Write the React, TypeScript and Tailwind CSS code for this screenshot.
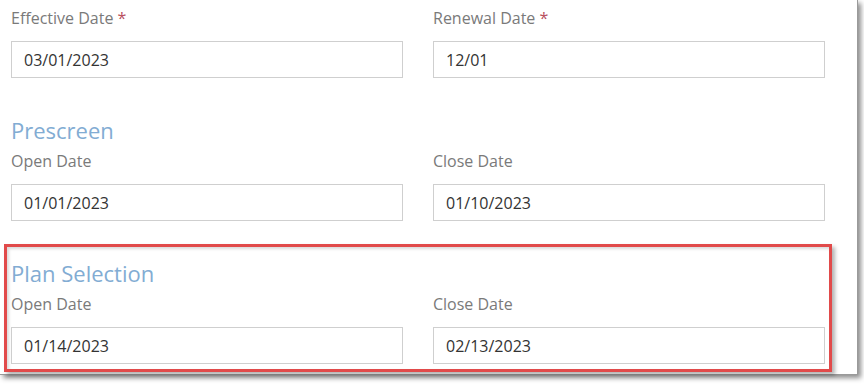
import React from 'react'

interface Field {
	label: string
	value: string
	required?: boolean
}

interface Section {
	title?: string
	fields: [Field, Field]
	highlight?: boolean
}

const SECTIONS: Section[] = [
	{
		fields: [
			{ label: 'Effective Date', value: '03/01/2023', required: true },
			{ label: 'Renewal Date', value: '12/01', required: true },
		],
	},
	{
		title: 'Prescreen',
		fields: [
			{ label: 'Open Date', value: '01/01/2023' },
			{ label: 'Close Date', value: '01/10/2023' },
		],
	},
	{
		title: 'Plan Selection',
		highlight: true,
		fields: [
			{ label: 'Open Date', value: '01/14/2023' },
			{ label: 'Close Date', value: '02/13/2023' },
		],
	},
]

function DateField({ label, value, required }: Field) {
	return (
		<div className="flex flex-col">
			<label className="h-[20px] text-[16px] leading-[20px] text-[#7a7a7a]">
				{label}
				{required && <span className="text-[#b8505e]"> *</span>}
			</label>
			<input
				readOnly
				defaultValue={value}
				className="mt-[13px] h-[37px] w-full border border-[#cfcfcf] bg-white px-3 text-[16px] text-[#333] outline-none"
			/>
		</div>
	)
}

export default function App() {
	return (
		<div className="h-[386px] w-[864px] overflow-hidden bg-white font-['Open_Sans',sans-serif]">
			<div className="h-[375px] w-[858px] border-r border-b border-[#9a9a9a] bg-white pl-[11px] pt-2 shadow-[3px_3px_5px_rgba(0,0,0,0.45)]">
				<div className="flex w-[814px] flex-col gap-[39px]">
					{SECTIONS.map((s, i) => (
						<div key={i} className="relative">
							{s.highlight && (
								<div className="pointer-events-none absolute -top-4 -right-[7px] -bottom-2 -left-[7px] border-[3px] border-[#e14a4a] shadow-[3px_3px_4px_rgba(0,0,0,0.3),inset_2px_2px_3px_rgba(0,0,0,0.15)]" />
							)}
							{s.title && (
								<h2 className="mb-[7px] h-[27px] text-[22px] leading-[27px] font-normal text-[#82acd3]">{s.title}</h2>
							)}
							<div className="grid grid-cols-[392px_392px] gap-[30px]">
								{s.fields.map((f) => (
									<DateField key={f.label} {...f} />
								))}
							</div>
						</div>
					))}
				</div>
			</div>
		</div>
	)
}
